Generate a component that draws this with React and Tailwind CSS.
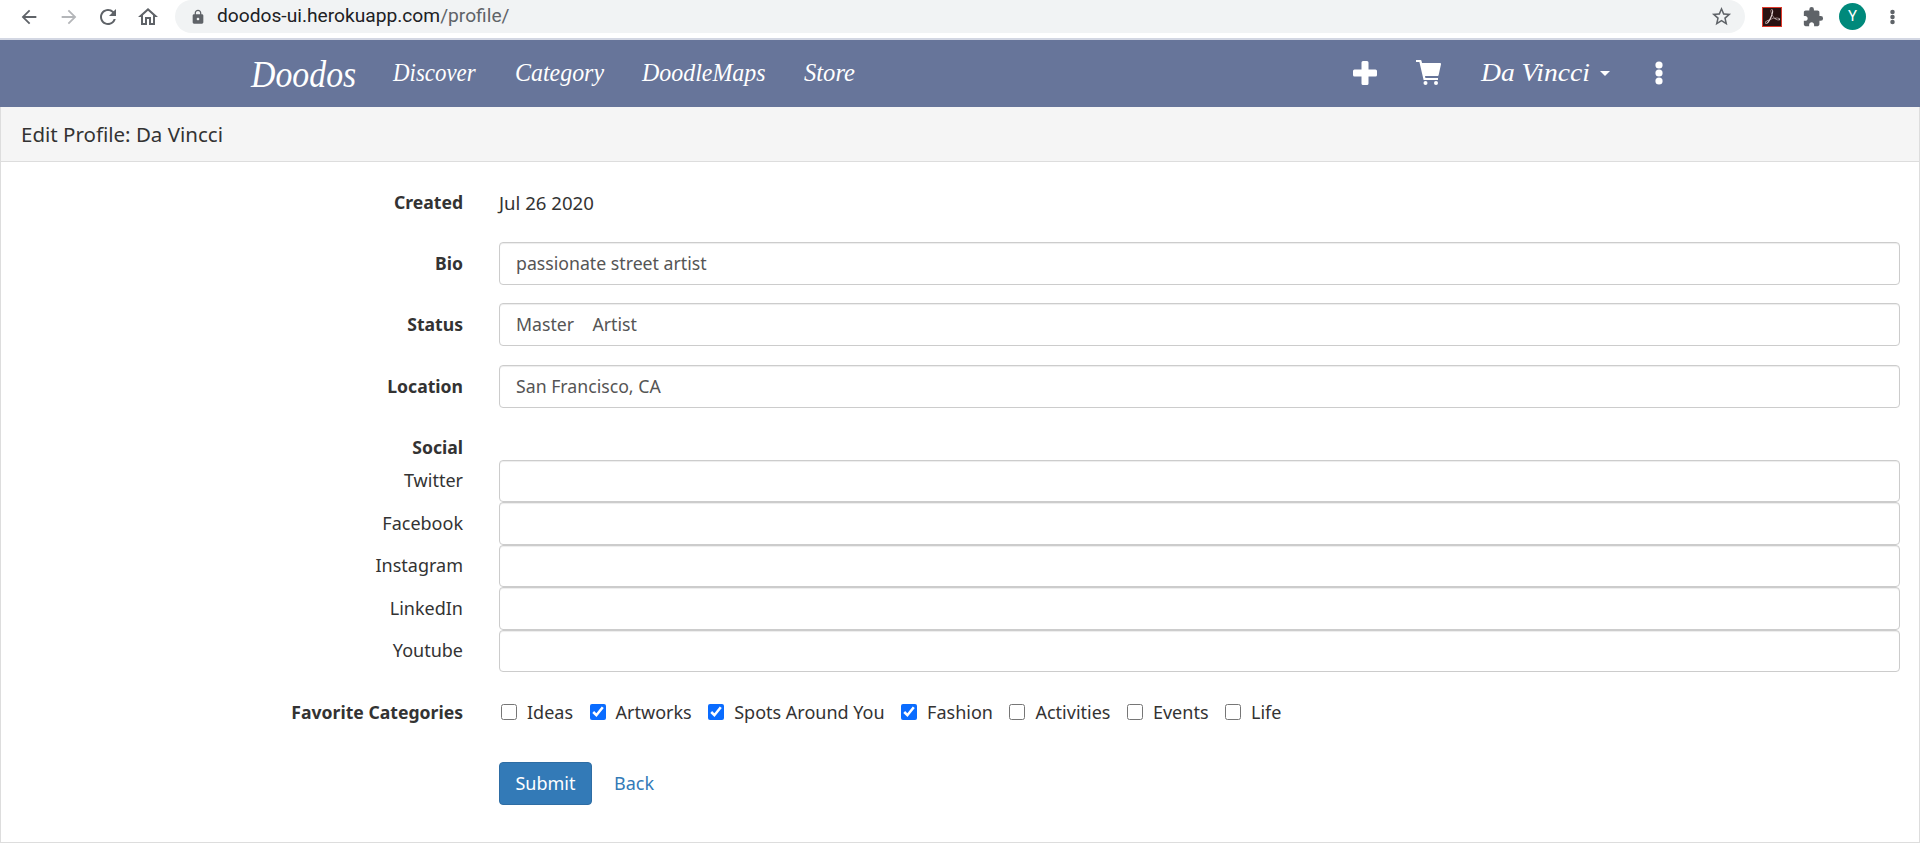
import React from 'react';
import { MdArrowBack, MdArrowForward, MdRefresh, MdOutlineHome, MdLock, MdStarBorder, MdExtension } from 'react-icons/md';
import { SiAdobeacrobatreader } from 'react-icons/si';

const scriptFont = "[font-family:'Brush_Script_MT','Liberation_Serif',cursive] italic inline-block origin-left shrink-0";

const Kebab = ({ className }) => (
    <svg viewBox="0 0 8 24" className={className} fill="currentColor">
        <circle cx="4" cy="4" r="3.6" />
        <circle cx="4" cy="12" r="3.6" />
        <circle cx="4" cy="20" r="3.6" />
    </svg>
);

const BrowserBar = () => (
    <div className="h-[38px] bg-white flex items-start text-[#5f6368]">
        <div className="w-[175px] h-[33px] flex items-center pl-[18px]">
            <MdArrowBack className="w-[22px] h-[22px]" />
            <MdArrowForward className="w-[22px] h-[22px] ml-[18px] text-[#b4b6b9]" />
            <MdRefresh className="w-[24px] h-[24px] ml-[16px]" />
            <MdOutlineHome className="w-[24px] h-[24px] ml-[16px]" />
        </div>
        <div className="w-[1570px] h-[33px] bg-[#f1f3f4] rounded-r-full rounded-l-full flex items-center pl-[15px] pr-[12px]">
            <MdLock className="w-[16px] h-[16px]" />
            <span className="ml-[11px] text-[19.2px] text-[#202124] [font-family:Roboto,sans-serif]">
                doodos-ui.herokuapp.com<span className="text-[#5f6368]">/profile/</span>
            </span>
            <MdStarBorder className="w-[23px] h-[23px] ml-auto" />
        </div>
        <div className="flex items-center h-[33px]">
            <div className="ml-[17px] w-[20px] h-[20px] bg-[#2a1212] border border-[#e0392b] flex items-center justify-center">
                <SiAdobeacrobatreader className="w-[15px] h-[15px] text-[#e8d8d8]" />
            </div>
            <MdExtension className="w-[22px] h-[22px] ml-[20px]" />
            <div className="ml-[15px] w-[27px] h-[27px] rounded-full bg-[#00897b] text-white text-[15px] flex items-center justify-center [font-family:Roboto,sans-serif]">Y</div>
            <Kebab className="w-[5px] h-[16px] ml-[24px]" />
        </div>
    </div>
);

const navLinks = [
    ['Discover', 'w-[122px] scale-x-[0.88]'],
    ['Category', 'w-[127px] scale-x-[0.92]'],
    ['DoodleMaps', 'w-[162px] scale-x-[0.92]'],
    ['Store', 'w-[549px] scale-x-[0.945]'],
];

const Navbar = () => (
    <div className="h-[69px] bg-[#67759a] border-t-2 border-[#d3d7e3] flex items-center text-white pl-[251px]">
        <span className={`${scriptFont} text-[38px] leading-none w-[142px] scale-x-[0.89] font-medium`}>Doodos</span>
        {navLinks.map(([name, w]) => (
            <span key={name} className={`${scriptFont} text-[26px] leading-none ${w} -mt-[2px]`}>{name}</span>
        ))}
        <svg viewBox="0 0 24 24" className="w-[24px] h-[24px] -mt-[2px]" fill="currentColor">
            <path d="M8.5 1.5a1.5 1.5 0 0 1 1.5-1.5h4a1.5 1.5 0 0 1 1.5 1.5V8.5h7a1.5 1.5 0 0 1 1.5 1.5v4a1.5 1.5 0 0 1-1.5 1.5h-7v7a1.5 1.5 0 0 1-1.5 1.5h-4a1.5 1.5 0 0 1-1.5-1.5v-7h-7A1.5 1.5 0 0 1 0 14v-4a1.5 1.5 0 0 1 1.5-1.5h7z" />
        </svg>
        <svg viewBox="0 0 25 25" className="w-[25px] h-[25px] ml-[39px] -mt-[2px]" fill="currentColor">
            <path d="M0 0h4.5a1 1 0 0 1 1 .8L6 3h18a1 1 0 0 1 1 1.2l-2.4 11a1 1 0 0 1-1 .8H9l.4 2H22v2H7.6L3.4 2H0z" />
            <circle cx="9.5" cy="23" r="2" />
            <circle cx="20" cy="23" r="2" />
        </svg>
        <span className={`${scriptFont} text-[26px] leading-none ml-[40px] w-[119px] scale-x-[1.06] -mt-[2px]`}>Da Vincci</span>
        <span className="w-0 h-0 border-x-[5px] border-x-transparent border-t-[5px] border-t-white" />
        <Kebab className="w-[8px] h-[24px] ml-[45px] -mt-[2px]" />
    </div>
);

const Label = ({ children, bold }) => (
    <div className={`w-[462px] shrink-0 text-right ${bold ? 'font-bold text-[17.6px]' : ''}`}>{children}</div>
);

const Field = ({ label, value, bold, className = '' }) => (
    <div className={`flex items-center h-[42.5px] ${className}`}>
        <Label bold={bold}>{label}</Label>
        <input
            readOnly
            value={value}
            className="ml-[36px] flex-1 h-full bg-white border border-[#ccc] rounded-[4px] px-[16px] text-[#555] text-[17.7px] [font-family:inherit] shadow-[inset_0_1px_1px_rgba(0,0,0,0.075)]"
        />
    </div>
);

const categories = [
    ['Ideas', false],
    ['Artworks', true],
    ['Spots Around You', true],
    ['Fashion', true],
    ['Activities', false],
    ['Events', false],
    ['Life', false],
];

export default function App() {
    return (
        <div className="w-[1920px] h-[843px] overflow-hidden bg-white flex flex-col text-[#333] text-[18px] [font-family:'Noto_Sans',sans-serif]">
            <BrowserBar />
            <Navbar />
            <div className="flex-1 flex flex-col border border-t-0 border-[#ddd]">
                <div className="h-[55px] shrink-0 bg-[#f5f5f5] border-b border-[#ddd] flex items-center pl-[20px] text-[20.5px]">
                    Edit Profile: Da Vincci
                </div>
                <div className="pr-[19px] pt-[19px]">
                    <div className="flex items-center h-[43px] mb-[18px]">
                        <Label bold>Created</Label>
                        <span className="ml-[36px] text-[18.6px]">Jul 26 2020</span>
                    </div>
                    <Field label="Bio" value="passionate street artist" bold className="mb-[18.5px]" />
                    <Field label="Status" value="Master    Artist" bold className="mb-[19.5px]" />
                    <Field label="Location" value="San Francisco, CA" bold />
                    <div className="h-[24px] mt-[28px] flex items-center"><Label bold>Social</Label></div>
                    <Field label="Twitter" value="" />
                    <Field label="Facebook" value="" />
                    <Field label="Instagram" value="" />
                    <Field label="LinkedIn" value="" />
                    <Field label="Youtube" value="" />
                    <div className="flex items-center h-[42px] mt-[19px]">
                        <Label bold>Favorite Categories</Label>
                        <div className="ml-[38px] flex items-center gap-[16.5px]">
                            {categories.map(([name, checked]) => (
                                <label key={name} className="flex items-center gap-[10px]">
                                    <input type="checkbox" readOnly checked={checked} className="w-[16px] h-[16px] m-0 accent-[#0a6cff]" />
                                    <span>{name}</span>
                                </label>
                            ))}
                        </div>
                    </div>
                    <div className="flex items-center mt-[29px] pl-[498px]">
                        <button className="w-[93px] h-[43px] bg-[#337ab7] border border-[#2e6da4] rounded-[4px] text-white">Submit</button>
                        <a className="ml-[22px] text-[#337ab7]">Back</a>
                    </div>
                </div>
            </div>
        </div>
    );
}
